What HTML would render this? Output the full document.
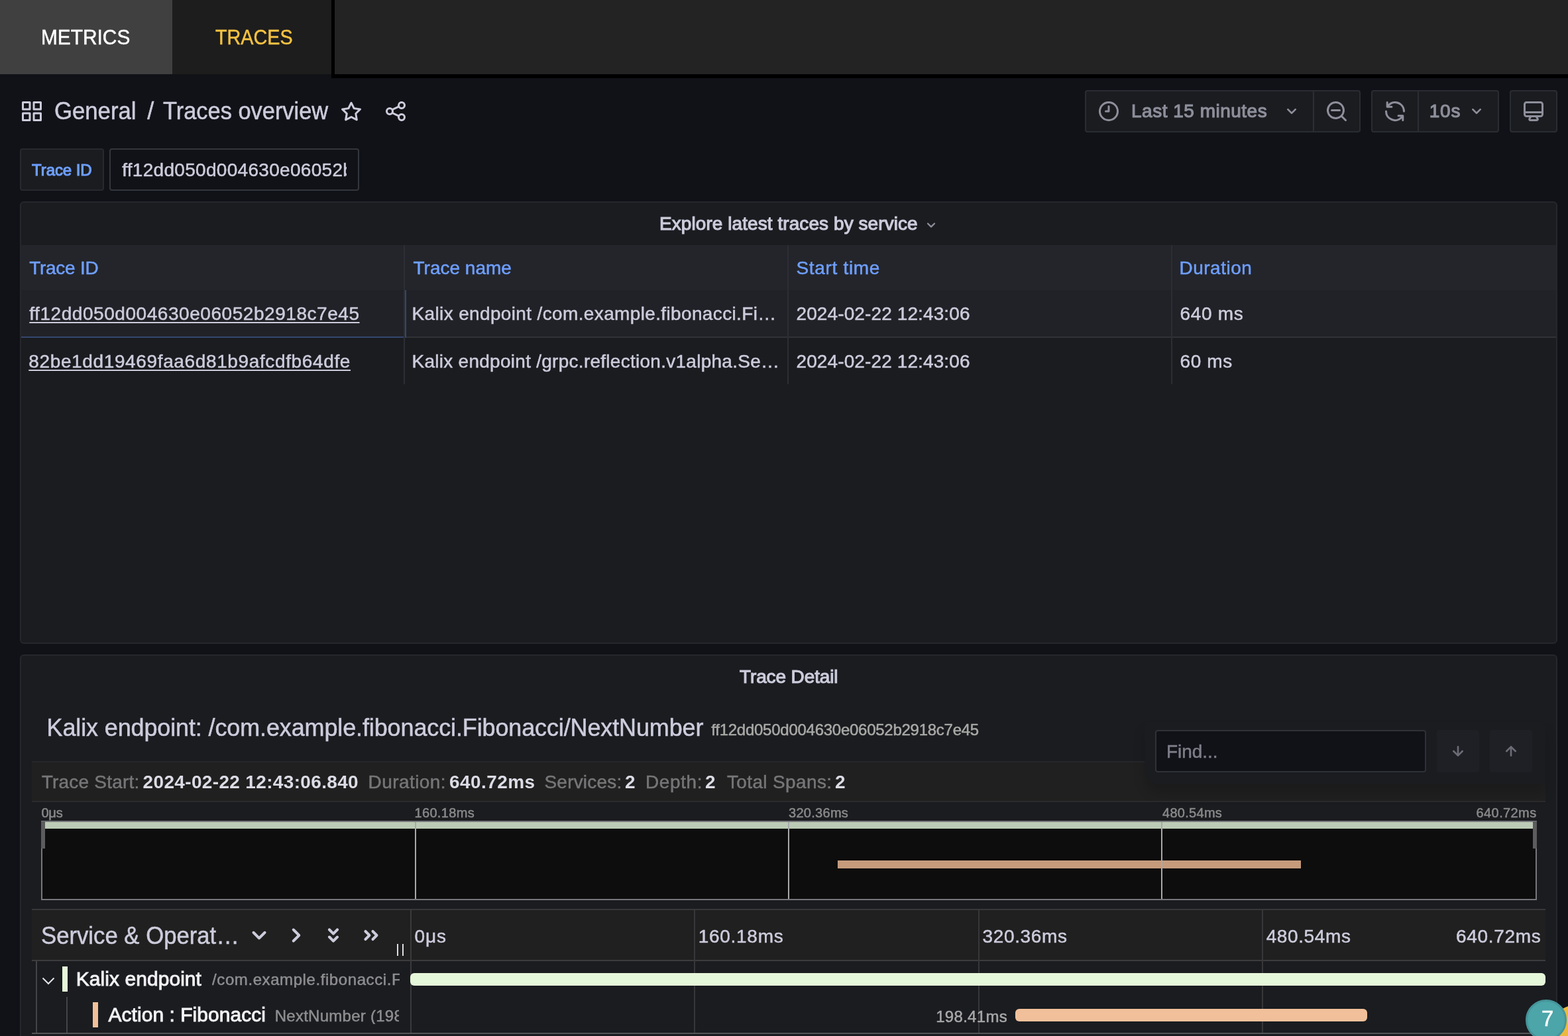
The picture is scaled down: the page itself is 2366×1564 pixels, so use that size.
<!DOCTYPE html>
<html lang="en">
<head>
<meta charset="utf-8">
<title>Traces overview - Grafana</title>
<style>
html,body{margin:0;padding:0;}
body{width:2366px;height:1564px;overflow:hidden;background:#111217;position:relative;font-family:"Liberation Sans",sans-serif;color:#ccccdc;}
.a{position:absolute;box-sizing:border-box;}
.t{position:absolute;white-space:nowrap;display:block;-webkit-text-stroke:0.5px currentColor;}
svg{position:absolute;display:block;}
.btn{background:#1a1c20;border:2px solid #2a2c33;border-radius:4px;}
.panel{background:#1a1c20;border:2px solid #25272d;border-radius:6px;}
.vl{background:#2c2e35;width:2px;}
.ic{fill:#ccccdc;}
.ic2{fill:#8e8f9b;}
</style>
</head>
<body>
<div id="root" style="position:absolute;left:0;top:0;width:2366px;height:1564px;overflow:hidden;will-change:transform;">
<!-- top tab bar -->
<div class="a" style="left:0;top:0;width:260px;height:112px;background:#404040"></div>
<div class="a" style="left:260px;top:0;width:240px;height:112px;background:#1d1d1d"></div>
<div class="a" style="left:500.4px;top:0;width:1866px;height:117.5px;background:#000"></div>
<div class="a" style="left:505.4px;top:0;width:1861px;height:112px;background:#232323"></div>

<!-- dashboard nav -->
<svg class="ic" style="left:30px;top:150px" width="36" height="36" viewBox="0 0 24 24"><path d="M10,13H3a1,1,0,0,0-1,1v7a1,1,0,0,0,1,1h7a1,1,0,0,0,1-1V14A1,1,0,0,0,10,13ZM9,20H4V15H9ZM21,2H14a1,1,0,0,0-1,1v7a1,1,0,0,0,1,1h7a1,1,0,0,0,1-1V3A1,1,0,0,0,21,2ZM20,9H15V4h5Zm1,4H14a1,1,0,0,0-1,1v7a1,1,0,0,0,1,1h7a1,1,0,0,0,1-1V14A1,1,0,0,0,21,13Zm-1,7H15V15h5ZM10,2H3A1,1,0,0,0,2,3v7a1,1,0,0,0,1,1h7a1,1,0,0,0,1-1V3A1,1,0,0,0,10,2ZM9,9H4V4H9Z"/></svg>
<svg class="ic" style="left:512px;top:150px" width="36" height="36" viewBox="0 0 24 24"><path d="M22,9.67A1,1,0,0,0,21.14,9l-5.69-.83L12.9,3a1,1,0,0,0-1.8,0L8.55,8.16,2.86,9a1,1,0,0,0-.81.68,1,1,0,0,0,.25,1l4.13,4-1,5.68A1,1,0,0,0,6.9,21.44L12,18.77l5.1,2.67a.93.93,0,0,0,.46.12,1,1,0,0,0,.59-.19,1,1,0,0,0,.4-1l-1-5.68,4.13-4A1,1,0,0,0,22,9.67Zm-6.15,4a1,1,0,0,0-.29.88l.72,4.2-3.76-2a1.06,1.06,0,0,0-.94,0l-3.76,2,.72-4.2a1,1,0,0,0-.29-.88l-3-3,4.21-.61a1,1,0,0,0,.76-.55L12,5.7l1.88,3.82a1,1,0,0,0,.76.55l4.21.61Z"/></svg>
<svg class="ic" style="left:579.4px;top:150px" width="36" height="36" viewBox="0 0 24 24"><path d="M18,14a4,4,0,0,0-3.08,1.48l-5.1-2.35a3.64,3.64,0,0,0,0-2.26l5.1-2.35A4,4,0,1,0,14,6a4.17,4.17,0,0,0,.07.71L8.79,9.14a4,4,0,1,0,0,5.72l5.28,2.43A4.17,4.17,0,0,0,14,18a4,4,0,1,0,4-4ZM18,4a2,2,0,1,1-2,2A2,2,0,0,1,18,4ZM6,14a2,2,0,1,1,2-2A2,2,0,0,1,6,14Zm12,6a2,2,0,1,1,2-2A2,2,0,0,1,18,20Z"/></svg>

<!-- time picker toolbar -->
<div class="a btn" style="left:1637px;top:136px;width:416px;height:64px"></div>
<div class="a vl" style="left:1981px;top:138px;height:60px"></div>
<div class="a btn" style="left:2069px;top:136px;width:193px;height:64px"></div>
<div class="a vl" style="left:2139px;top:138px;height:60px"></div>
<div class="a btn" style="left:2278px;top:136px;width:72px;height:64px"></div>
<svg class="ic2" style="left:1654.8px;top:150px" width="36" height="36" viewBox="0 0 24 24"><path d="M12,2A10,10,0,1,0,22,12,10.01114,10.01114,0,0,0,12,2Zm0,18a8,8,0,1,1,8-8A8.00917,8.00917,0,0,1,12,20ZM12,6a1,1,0,0,0-1,1v4H9a1,1,0,0,0,0,2h3a1,1,0,0,0,1-1V7A1,1,0,0,0,12,6Z"/></svg>
<svg class="ic2" style="left:1933.3px;top:152px" width="32" height="32" viewBox="0 0 24 24"><path d="M17,9.17a1,1,0,0,0-1.41,0L12,12.71,8.46,9.17a1,1,0,0,0-1.41,0,1,1,0,0,0,0,1.42l4.24,4.24a1,1,0,0,0,1.42,0L17,10.59A1,1,0,0,0,17,9.17Z"/></svg>
<svg class="ic2" style="left:1998.7px;top:150px" width="36" height="36" viewBox="0 0 24 24"><path d="M21.71,20.29,18,16.61A9,9,0,1,0,16.61,18l3.68,3.68a1,1,0,0,0,1.42,0A1,1,0,0,0,21.71,20.29ZM11,18a7,7,0,1,1,7-7A7,7,0,0,1,11,18Zm4-8H7a1,1,0,0,0,0,2h8a1,1,0,0,0,0-2Z"/></svg>
<svg class="ic2" style="left:2087px;top:150px" width="36" height="36" viewBox="0 0 24 24"><path d="M19.91,15.51H15.38a1,1,0,0,0,0,2h2.4A8,8,0,0,1,4,12a1,1,0,0,0-2,0,10,10,0,0,0,16.88,7.23V21a1,1,0,0,0,2,0V16.5A1,1,0,0,0,19.91,15.51ZM12,2A10,10,0,0,0,5.12,4.77V3a1,1,0,0,0-2,0V7.5a1,1,0,0,0,1,1h4.5a1,1,0,0,0,0-2H6.22A8,8,0,0,1,20,12a1,1,0,0,0,2,0A10,10,0,0,0,12,2Z"/></svg>
<svg class="ic2" style="left:2211.9px;top:152px" width="32" height="32" viewBox="0 0 24 24"><path d="M17,9.17a1,1,0,0,0-1.41,0L12,12.71,8.46,9.17a1,1,0,0,0-1.41,0,1,1,0,0,0,0,1.42l4.24,4.24a1,1,0,0,0,1.42,0L17,10.59A1,1,0,0,0,17,9.17Z"/></svg>
<svg class="ic2" style="left:2296px;top:150px" width="36" height="36" viewBox="0 0 24 24"><path d="M19,2H5A3,3,0,0,0,2,5V15a3,3,0,0,0,3,3H7.64l-.58,1a2,2,0,0,0,0,2,2,2,0,0,0,1.75,1h6.46A2,2,0,0,0,17,21a2,2,0,0,0,0-2l-.59-1H19a3,3,0,0,0,3-3V5A3,3,0,0,0,19,2ZM8.77,20,10,18H14l1.2,2ZM20,15a1,1,0,0,1-1,1H5a1,1,0,0,1-1-1V14H20Zm0-3H4V5A1,1,0,0,1,5,4H19a1,1,0,0,1,1,1Z"/></svg>

<!-- variable row -->
<div class="a" style="left:30px;top:224px;width:127px;height:64px;background:#1a1c20;border:2px solid #27292f;border-radius:4px"></div>
<div class="a" style="left:165px;top:224px;width:377px;height:64px;background:#111217;border:2px solid #34363d;border-radius:4px"></div>

<!-- panel 1 -->
<div class="a panel" style="left:30px;top:304px;width:2320px;height:668px"></div>
<div class="a" style="left:32px;top:370px;width:2316px;height:68px;background:#24252a"></div>
<div class="a" style="left:32px;top:438px;width:2316px;height:71px;background:#212227"></div>
<div class="a" style="left:32px;top:508px;width:2316px;height:2px;background:#313237"></div>
<div class="a" style="left:32px;top:508px;width:579px;height:2px;background:#34466e"></div>
<div class="a vl" style="left:609px;top:370px;height:210px"></div>
<div class="a" style="left:610.5px;top:438px;width:2px;height:72px;background:#34466e"></div>
<div class="a vl" style="left:1188px;top:370px;height:210px"></div>
<div class="a vl" style="left:1767px;top:370px;height:210px"></div>
<svg class="ic2" style="left:1391px;top:326px" width="28" height="28" viewBox="0 0 24 24"><path d="M17,9.17a1,1,0,0,0-1.41,0L12,12.71,8.46,9.17a1,1,0,0,0-1.41,0,1,1,0,0,0,0,1.42l4.24,4.24a1,1,0,0,0,1.42,0L17,10.59A1,1,0,0,0,17,9.17Z"/></svg>

<!-- panel 2 -->
<div class="a panel" style="left:30px;top:988px;width:2320px;height:600px"></div>
<!-- summary bar -->
<div class="a" style="left:48px;top:1149px;width:2284px;height:62px;background:#202020;border-top:2px solid #262729;border-bottom:2px solid #2b2b2d"></div>
<!-- search float -->
<div class="a" style="left:1727px;top:1090px;width:605px;height:94px;background:#1a1c20;border-radius:0 0 0 24px;box-shadow:0 14px 18px rgba(0,0,0,0.16)"></div>
<div class="a" style="left:1743px;top:1102px;width:409px;height:64px;background:#111217;border:2px solid #2f3138;border-radius:4px"></div>
<div class="a" style="left:2168px;top:1102px;width:64px;height:64px;background:#1e2025;border-radius:4px"></div>
<div class="a" style="left:2248px;top:1102px;width:64px;height:64px;background:#1e2025;border-radius:4px"></div>
<svg style="left:2184px;top:1118px;fill:#6b6c76" width="32" height="32" viewBox="0 0 24 24"><path d="M17.71,11.29a1,1,0,0,0-1.42,0L13,14.59V7a1,1,0,0,0-2,0v7.59l-3.29-3.3a1,1,0,0,0-1.42,1.42l5,5a1,1,0,0,0,.33.21.94.94,0,0,0,.76,0,1,1,0,0,0,.33-.21l5-5A1,1,0,0,0,17.71,11.29Z"/></svg>
<svg style="left:2264px;top:1118px;fill:#6b6c76" width="32" height="32" viewBox="0 0 24 24"><path d="M17.71,11.29l-5-5a1,1,0,0,0-.33-.21,1,1,0,0,0-.76,0,1,1,0,0,0-.33.21l-5,5a1,1,0,0,0,1.42,1.42L11,9.41V17a1,1,0,0,0,2,0V9.41l3.29,3.3a1,1,0,0,0,1.42,0A1,1,0,0,0,17.71,11.29Z"/></svg>

<!-- minimap -->
<div class="a" style="left:62px;top:1239px;width:2257px;height:120px;background:#0d0d0d;border:2px solid #77777b"></div>
<div class="a" style="left:64px;top:1241px;width:2253px;height:10px;background:#bccbb6"></div>
<div class="a" style="left:1264px;top:1299px;width:699px;height:12px;background:#c59b7c"></div>
<div class="a" style="left:626px;top:1241px;width:2px;height:116px;background:#a9a9ab"></div>
<div class="a" style="left:1189px;top:1241px;width:2px;height:116px;background:#a9a9ab"></div>
<div class="a" style="left:1752px;top:1241px;width:2px;height:116px;background:#a9a9ab"></div>
<div class="a" style="left:62px;top:1240px;width:6px;height:41px;background:#5c5c5e"></div>
<div class="a" style="left:2313px;top:1240px;width:6px;height:41px;background:#5c5c5e"></div>

<!-- timeline header -->
<div class="a" style="left:48px;top:1372px;width:2284px;height:79px;background:#202020;border-top:2px solid #38383a;border-bottom:2px solid #3c3c3e"></div>
<div class="a" style="left:619px;top:1374px;width:2px;height:185px;background:#3a3a3c"></div>
<div class="a" style="left:1047px;top:1374px;width:2px;height:185px;background:#37373a"></div>
<div class="a" style="left:1476px;top:1374px;width:2px;height:185px;background:#37373a"></div>
<div class="a" style="left:1904px;top:1374px;width:2px;height:185px;background:#37373a"></div>
<svg class="ic" style="left:367.2px;top:1388px" width="48" height="48" viewBox="0 0 24 24"><path d="M17,9.17a1,1,0,0,0-1.41,0L12,12.71,8.46,9.17a1,1,0,0,0-1.41,0,1,1,0,0,0,0,1.42l4.24,4.24a1,1,0,0,0,1.42,0L17,10.59A1,1,0,0,0,17,9.17Z"/></svg>
<svg class="ic" style="left:422.5px;top:1388.3px" width="48" height="48" viewBox="0 0 24 24"><path d="M14.83,11.29,10.59,7.05a1,1,0,0,0-1.42,0,1,1,0,0,0,0,1.41L12.71,12,9.17,15.54a1,1,0,0,0,0,1.41,1,1,0,0,0,.71.29,1,1,0,0,0,.71-.29l4.24-4.24A1,1,0,0,0,14.83,11.29Z"/></svg>
<svg class="ic" style="left:478.7px;top:1388.3px" width="48" height="48" viewBox="0 0 24 24"><path d="M11.29,11.46a1,1,0,0,0,1.42,0l3-3A1,1,0,1,0,14.29,7L12,9.34,9.71,7A1,1,0,1,0,8.29,8.46Zm3,1.08L12,14.84l-2.29-2.3A1,1,0,0,0,8.29,14l3,3a1,1,0,0,0,1.42,0l3-3a1,1,0,0,0-1.42-1.42Z"/></svg>
<svg class="ic" style="left:535.5px;top:1388.3px" width="48" height="48" viewBox="0 0 24 24"><path d="M8.46,8.29A1,1,0,1,0,7,9.71L9.34,12,7,14.29a1,1,0,0,0,0,1.42,1,1,0,0,0,1.42,0l3-3a1,1,0,0,0,0-1.42Zm8.5,3-3-3a1,1,0,0,0-1.42,1.42L14.84,12l-2.3,2.29a1,1,0,0,0,0,1.42,1,1,0,0,0,1.42,0l3-3A1,1,0,0,0,16.96,11.29Z"/></svg>
<div class="a" style="left:598.7px;top:1425px;width:2.2px;height:18px;background:#dcdce2"></div>
<div class="a" style="left:606.8px;top:1425px;width:2.2px;height:18px;background:#dcdce2"></div>

<!-- span rows -->
<div class="a" style="left:54px;top:1451px;width:2px;height:108px;background:#444447"></div>
<div class="a" style="left:100px;top:1505px;width:2px;height:54px;background:#444447"></div>
<div class="a" style="left:48px;top:1559px;width:2284px;height:2px;background:#565656"></div>
<svg style="left:63px;top:1474px" width="20" height="14" viewBox="0 0 20 14"><path d="M1.5,2.5 L10,11 L18.5,2.5" fill="none" stroke="#e4e4ea" stroke-width="2"/></svg>
<div class="a" style="left:94px;top:1459px;width:8px;height:38px;background:#e6f8da"></div>
<div class="a" style="left:140px;top:1513px;width:8px;height:38px;background:#f1c09a"></div>
<div class="a" style="left:619px;top:1469px;width:1713px;height:19px;background:#e6f8da;border-radius:6px"></div>
<div class="a" style="left:1532px;top:1523px;width:531px;height:19px;background:#f1c09a;border-radius:6px"></div>

<!-- floating badge -->
<div class="a" style="left:2335.3px;top:1517.3px;width:89.4px;height:89.4px;background:#ecb940;border-radius:50%"></div>
<div class="a" style="left:2302px;top:1509px;width:62px;height:62px;border-radius:50%;background:#4ba5a9;border:3px solid #46949a"></div>

<span class="t" style="left:61.63px;top:40px;font-size:32px;line-height:32px;color:#ffffff;transform:scaleX(0.9326);transform-origin:0 0;">METRICS</span>
<span class="t" style="left:324.5px;top:40px;font-size:32px;line-height:32px;color:#f5c242;transform:scaleX(0.8992);transform-origin:0 0;">TRACES</span>
<span class="t" style="left:82.44px;top:150px;font-size:36px;line-height:36px;color:#ccccdc;transform:scaleX(0.9640);transform-origin:0 0;">General</span>
<span class="t" style="left:222.3px;top:150px;font-size:36px;line-height:36px;color:#ccccdc;">/</span>
<span class="t" style="left:246px;top:150px;font-size:36px;line-height:36px;color:#ccccdc;transform:scaleX(0.9556);transform-origin:0 0;">Traces overview</span>
<span class="t" style="left:1707px;top:154px;font-size:28px;line-height:28px;color:#8e8f9b;-webkit-text-stroke-width:1.1px;letter-spacing:0.5px;">Last 15 minutes</span>
<span class="t" style="left:2156.7px;top:154px;font-size:28px;line-height:28px;color:#8e8f9b;-webkit-text-stroke-width:1.1px;letter-spacing:0.85px;">10s</span>
<span class="t" style="left:48px;top:245px;font-size:24px;line-height:24px;color:#6e9fff;-webkit-text-stroke-width:1.1px;letter-spacing:-0.06px;">Trace ID</span>
<span class="t" style="left:184.2px;top:243px;font-size:28px;line-height:28px;color:#ccccdc;letter-spacing:0.3px;width:339.3px;overflow:hidden;">ff12dd050d004630e06052b2918c7e45</span>
<span class="t" style="left:995px;top:324px;font-size:28px;line-height:28px;color:#ccccdc;-webkit-text-stroke-width:1.1px;letter-spacing:0.07px;">Explore latest traces by service</span>
<span class="t" style="left:44.2px;top:391px;font-size:28px;line-height:28px;color:#6e9fff;letter-spacing:-0.26px;">Trace ID</span>
<span class="t" style="left:623.5px;top:391px;font-size:28px;line-height:28px;color:#6e9fff;">Trace name</span>
<span class="t" style="left:1201.5px;top:391px;font-size:28px;line-height:28px;color:#6e9fff;letter-spacing:0.68px;">Start time</span>
<span class="t" style="left:1779.5px;top:391px;font-size:28px;line-height:28px;color:#6e9fff;letter-spacing:0.5px;">Duration</span>
<span class="t" style="left:44.3px;top:460px;font-size:28px;line-height:28px;color:#ccccdc;letter-spacing:0.55px;text-decoration:underline;text-underline-offset:3px;">ff12dd050d004630e06052b2918c7e45</span>
<span class="t" style="left:621.5px;top:460px;font-size:28px;line-height:28px;color:#ccccdc;letter-spacing:0.36px;">Kalix endpoint /com.example.fibonacci.Fi…</span>
<span class="t" style="left:1201.5px;top:460px;font-size:28px;line-height:28px;color:#ccccdc;letter-spacing:0.11px;">2024-02-22 12:43:06</span>
<span class="t" style="left:1780.5px;top:460px;font-size:28px;line-height:28px;color:#ccccdc;letter-spacing:0.7px;">640 ms</span>
<span class="t" style="left:43.3px;top:532px;font-size:28px;line-height:28px;color:#ccccdc;letter-spacing:0.63px;text-decoration:underline;text-underline-offset:3px;">82be1dd19469faa6d81b9afcdfb64dfe</span>
<span class="t" style="left:621.5px;top:532px;font-size:28px;line-height:28px;color:#ccccdc;letter-spacing:0.27px;">Kalix endpoint /grpc.reflection.v1alpha.Se…</span>
<span class="t" style="left:1201.5px;top:532px;font-size:28px;line-height:28px;color:#ccccdc;letter-spacing:0.11px;">2024-02-22 12:43:06</span>
<span class="t" style="left:1780.5px;top:532px;font-size:28px;line-height:28px;color:#ccccdc;letter-spacing:0.62px;">60 ms</span>
<span class="t" style="left:1116px;top:1008px;font-size:28px;line-height:28px;color:#ccccdc;-webkit-text-stroke-width:1.1px;letter-spacing:-0.12px;">Trace Detail</span>
<span class="t" style="left:70.5px;top:1081px;font-size:36px;line-height:36px;color:#ccccdc;letter-spacing:-0.13px;">Kalix endpoint: /com.example.fibonacci.Fibonacci/NextNumber</span>
<span class="t" style="left:1073.3px;top:1090px;font-size:24px;line-height:24px;color:#a9a9a6;letter-spacing:-0.26px;">ff12dd050d004630e06052b2918c7e45</span>
<span class="t" style="left:1760px;top:1121px;font-size:28px;line-height:28px;color:#7d7e89;letter-spacing:-0.05px;">Find...</span>
<span class="t" style="left:62.8px;top:1167px;font-size:28px;line-height:28px;color:#767678;letter-spacing:0.2px;">Trace Start:</span>
<span class="t" style="left:215.6px;top:1167px;font-size:28px;line-height:28px;color:#dcdce6;font-weight:700;-webkit-text-stroke-width:0px;letter-spacing:0.34px;">2024-02-22 12:43:06.840</span>
<span class="t" style="left:555.5px;top:1167px;font-size:28px;line-height:28px;color:#767678;letter-spacing:0.44px;">Duration:</span>
<span class="t" style="left:678px;top:1167px;font-size:28px;line-height:28px;color:#dcdce6;font-weight:700;-webkit-text-stroke-width:0px;letter-spacing:0.43px;">640.72ms</span>
<span class="t" style="left:821.5px;top:1167px;font-size:28px;line-height:28px;color:#767678;letter-spacing:0.19px;">Services:</span>
<span class="t" style="left:943px;top:1167px;font-size:28px;line-height:28px;color:#dcdce6;font-weight:700;-webkit-text-stroke-width:0px;">2</span>
<span class="t" style="left:974px;top:1167px;font-size:28px;line-height:28px;color:#767678;letter-spacing:0.6px;">Depth:</span>
<span class="t" style="left:1064px;top:1167px;font-size:28px;line-height:28px;color:#dcdce6;font-weight:700;-webkit-text-stroke-width:0px;">2</span>
<span class="t" style="left:1097px;top:1167px;font-size:28px;line-height:28px;color:#767678;letter-spacing:0.36px;">Total Spans:</span>
<span class="t" style="left:1260px;top:1167px;font-size:28px;line-height:28px;color:#dcdce6;font-weight:700;-webkit-text-stroke-width:0px;">2</span>
<span class="t" style="left:62.4px;top:1217px;font-size:20px;line-height:20px;color:#8a8a8a;letter-spacing:-0.2px;">0μs</span>
<span class="t" style="left:625.4px;top:1217px;font-size:20px;line-height:20px;color:#8a8a8a;letter-spacing:0.37px;">160.18ms</span>
<span class="t" style="left:1190px;top:1217px;font-size:20px;line-height:20px;color:#8a8a8a;letter-spacing:0.29px;">320.36ms</span>
<span class="t" style="left:1754px;top:1217px;font-size:20px;line-height:20px;color:#8a8a8a;letter-spacing:0.29px;">480.54ms</span>
<span class="t" style="left:2227.6px;top:1217px;font-size:20px;line-height:20px;color:#8a8a8a;letter-spacing:0.39px;">640.72ms</span>
<span class="t" style="left:61.54px;top:1395px;font-size:36px;line-height:36px;color:#ccccdc;transform:scaleX(0.9639);transform-origin:0 0;">Service &amp; Operat…</span>
<span class="t" style="left:625.5px;top:1400px;font-size:28px;line-height:28px;color:#ccccdc;letter-spacing:0.85px;">0μs</span>
<span class="t" style="left:1053.8px;top:1400px;font-size:28px;line-height:28px;color:#ccccdc;letter-spacing:0.7px;">160.18ms</span>
<span class="t" style="left:1482.5px;top:1400px;font-size:28px;line-height:28px;color:#ccccdc;letter-spacing:0.64px;">320.36ms</span>
<span class="t" style="left:1910.7px;top:1400px;font-size:28px;line-height:28px;color:#ccccdc;letter-spacing:0.61px;">480.54ms</span>
<span class="t" style="left:2197px;top:1400px;font-size:28px;line-height:28px;color:#ccccdc;letter-spacing:0.69px;">640.72ms</span>
<span class="t" style="left:114.8px;top:1463px;font-size:30px;line-height:30px;color:#f2f2f4;-webkit-text-stroke-width:0.9px;letter-spacing:0.05px;">Kalix endpoint</span>
<span class="t" style="left:320.1px;top:1467px;font-size:24px;line-height:24px;color:#8e8e90;letter-spacing:0.58px;width:283.1px;overflow:hidden;">/com.example.fibonacci.Fibonacci/NextNumber</span>
<span class="t" style="left:163.5px;top:1517px;font-size:30px;line-height:30px;color:#f2f2f4;-webkit-text-stroke-width:0.9px;letter-spacing:0.04px;">Action : Fibonacci</span>
<span class="t" style="left:414.7px;top:1522px;font-size:24px;line-height:24px;color:#8e8e90;letter-spacing:0.26px;width:187.5px;overflow:hidden;">NextNumber (198.41ms)</span>
<span class="t" style="left:1412.2px;top:1523px;font-size:24px;line-height:24px;color:#a8a8a8;letter-spacing:0.3px;">198.41ms</span>
<span class="t" style="left:2326px;top:1521px;font-size:33px;line-height:33px;color:#ffffff;">7</span>
</div>
</body>
</html>
